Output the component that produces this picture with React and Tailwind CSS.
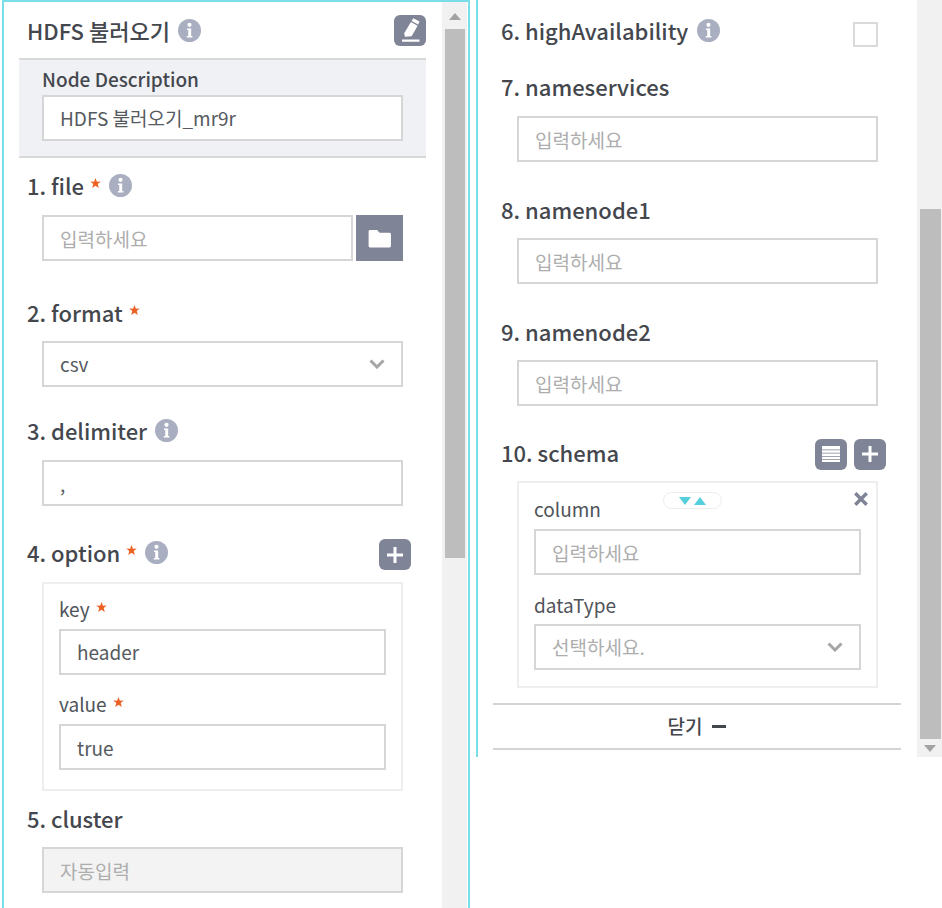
const inputBox = "block box-border h-[46px] w-full border-2 border-[#d6d6d6] px-[16px] text-[19px] text-[#555a60] outline-none placeholder:text-[#adadad]";

function InfoIcon({ className = "ml-[8px]" }) {
  return (
    <svg viewBox="0 0 22 22" className={`h-[23px] w-[23px] shrink-0 ${className}`}>
      <circle cx="11" cy="11" r="11" fill="#a9afc1" />
      <circle cx="11" cy="5.6" r="2" fill="#fff" />
      <path d="M8.6 9h4v7.2h1.2v1.6H8.4v-1.6h1.4v-5.6H8.6z" fill="#fff" />
    </svg>
  );
}

function IconButton({ children }) {
  return (
    <button className="flex h-[31px] w-[32px] items-center justify-center rounded-[6px] bg-[#7f8496]">
      {children}
    </button>
  );
}

function PlusIcon() {
  return (
    <svg viewBox="0 0 20 20" className="h-[20px] w-[20px]">
      <path d="M8.5 2h3v6.5H18v3h-6.500V18h-3v-6.500H2v-3h6.500z" fill="#fff" />
    </svg>
  );
}

function Chevron() {
  return (
    <svg viewBox="0 0 16 10" className="h-[10px] w-[16px]">
      <path d="M1.500 1.500L8 8l6.500-6.500" fill="none" stroke="#a6a6a6" strokeWidth="3" />
    </svg>
  );
}

function Star() {
  return (
    <svg viewBox="0 0 12 12" className="mb-[4px] ml-[6px] h-[11px] w-[11px] shrink-0">
      <path d="M6 0l1.500 4.100 4.300-.2-3.400 2.700 1.200 4.200L6 8.400l-3.600 2.400 1.200-4.200L.2 3.900l4.300.2z" fill="#ee5f22" />
    </svg>
  );
}

function Label({ children, className = "", size = "text-[22px]", lift = "pb-[3px]" }) {
  return (
    <div className={`flex h-[30px] items-center font-medium text-[#44474d] ${size} ${lift} ${className}`}>
      {children}
    </div>
  );
}

function SubLabel({ children, className = "" }) {
  return (
    <div className={`flex h-[24px] items-center pb-[1px] text-[19px] text-[#50545a] ${className}`}>
      {children}
    </div>
  );
}

function TextInput({ value, placeholder = "입력하세요", className = "", bg = "bg-white" }) {
  return <input readOnly value={value ?? ""} placeholder={placeholder} className={`${inputBox} ${bg} ${className}`} />;
}

function Select({ value, muted }) {
  return (
    <div className={`${inputBox} flex items-center justify-between bg-white ${muted ? "text-[#adadad]" : ""}`}>
      <span>{value}</span>
      <Chevron />
    </div>
  );
}

function Scrollbar({ thumbClass, topClass, bottom }) {
  return (
    <div className="flex w-[25px] shrink-0 flex-col bg-[#f1f1f1]">
      <div className={`flex items-center justify-center ${topClass}`}>
        {!bottom && (
          <svg viewBox="0 0 12 7" className="mt-[2px] h-[7px] w-[12px]">
            <path d="M6 0l6 7H0z" fill="#a3a3a3" />
          </svg>
        )}
      </div>
      <div className={`bg-[#bdbdbd] ${thumbClass}`} />
      {bottom && (
        <div className="flex flex-1 items-center justify-center">
          <svg viewBox="0 0 12 7" className="h-[7px] w-[12px]">
            <path d="M6 7l6-7H0z" fill="#a3a3a3" />
          </svg>
        </div>
      )}
    </div>
  );
}

function LeftPanel() {
  return (
    <div className="flex h-[908px] w-[468px] shrink-0 border-x-2 border-t-2 border-[#7adde7]">
      <div className="w-[438px] shrink-0">
        <div className="ml-[23px] mr-[16px] mt-[13px] flex h-[31px] items-center justify-between">
          <Label lift="">HDFS 불러오기 <InfoIcon /></Label>
          <IconButton>
            <svg viewBox="0 0 24 24" className="h-[27px] w-[27px]">
              <path d="M14.500 1l5.500 3-1.200 2.600-5.800-3.100z" fill="#fff" />
              <path d="M12.400 4.500l5.900 3.200L13 17l-6 .5-.6-3z" fill="#fff" />
              <path d="M4.500 20h15.500v2H4.500z" fill="#fff" />
            </svg>
          </IconButton>
        </div>

        <div className="ml-[15px] mr-[16px] mt-[12px] h-[100px] border-y-2 border-[#d8d8d8] bg-[#f0f1f5] px-[23px] pt-[5px]">
          <Label size="text-[19px]" lift="pb-[2px]">Node Description</Label>
          <TextInput value="HDFS 불러오기_mr9r" className="w-[361px] pb-[2px]" />
        </div>

        <div className="ml-[23px] mr-[39px]">
          <Label className="mt-[14px]">1. file <Star /> <InfoIcon /></Label>
          <div className="ml-[15px] mt-[13px] flex gap-[3px]">
            <TextInput className="flex-1" />
            <button className="flex h-[46px] w-[47px] shrink-0 items-center justify-center bg-[#7f8496]">
              <svg viewBox="0 0 24 20" className="h-[19px] w-[24px]">
                <path d="M1.500 1h7.500l2.500 3H22a1.500 1.500 0 0 1 1.500 1.500V18a1.500 1.500 0 0 1-1.500 1.500H1.500A1.500 1.500 0 0 1 0 18V2.500A1.500 1.500 0 0 1 1.500 1z" fill="#fff" />
              </svg>
            </button>
          </div>

          <Label className="mt-[38px]">2. format <Star /></Label>
          <div className="ml-[15px] mt-[12px]"><Select value="csv" /></div>

          <Label className="mt-[30px]">3. delimiter <InfoIcon /></Label>
          <div className="ml-[15px] mt-[13px]"><TextInput value="," /></div>

          <div className="relative mt-[33px]">
            <Label>4. option <Star /> <InfoIcon /></Label>
            <div className="absolute right-[-8px] top-0">
              <IconButton><PlusIcon /></IconButton>
            </div>
          </div>

          <div className="ml-[15px] mt-[13px] h-[209px] border-2 border-[#eeeeee] px-[15px] pt-[14px]">
            <SubLabel>key <Star /></SubLabel>
            <TextInput value="header" className="mt-[7px] pb-[2px]" />
            <SubLabel className="mt-[18px]">value <Star /></SubLabel>
            <TextInput value="true" className="mt-[7px]" />
          </div>

          <Label className="mt-[14px]">5. cluster</Label>
          <div className="ml-[15px] mt-[12px]">
            <TextInput placeholder="자동입력" bg="bg-[#f3f3f3]" />
          </div>
        </div>
      </div>
      <Scrollbar topClass="h-[27px]" thumbClass="ml-[3px] h-[529px] w-[20px]" />
    </div>
  );
}

function RightPanel() {
  return (
    <div className="ml-[6px] flex h-[757px] w-[466px] shrink-0 border-l-2 border-[#7adde7]">
      <div className="w-[439px] shrink-0">
        <div className="ml-[23px] mr-[39px]">
          <div className="mt-[17px] flex h-[30px] items-center justify-between">
            <Label>6. highAvailability <InfoIcon className="ml-[9px]" /></Label>
            <div className="mt-[5px] h-[25px] w-[25px] border-2 border-[#dadada]" />
          </div>

          <Label className="mt-[26px]">7. nameservices</Label>
          <div className="ml-[16px] mt-[13px]"><TextInput /></div>

          <Label className="mt-[34px]">8. namenode1</Label>
          <div className="ml-[16px] mt-[12px]"><TextInput /></div>

          <Label className="mt-[34px]">9. namenode2</Label>
          <div className="ml-[16px] mt-[12px]"><TextInput /></div>

          <div className="mt-[33px] flex h-[30px] items-center justify-between">
            <Label>10. schema</Label>
            <div className="mr-[-8px] flex gap-[7px]">
              <IconButton>
                <svg viewBox="0 0 18 16" className="h-[16px] w-[18px]">
                  <path d="M0 0h18v3.500H0zM0 4.300h18v2.400H0zM0 7.500h18v2.400H0zM0 10.700h18v2.400H0zM0 13.800h18V16H0z" fill="#fff" />
                </svg>
              </IconButton>
              <IconButton><PlusIcon /></IconButton>
            </div>
          </div>

          <div className="relative ml-[16px] mt-[12px] h-[207px] border-2 border-[#eeeeee] px-[15px] pt-[15px]">
            <div className="absolute left-[144px] top-[9px] flex h-[17px] w-[59px] items-center justify-center gap-[3px] rounded-full border border-[#ececec] bg-white">
              <svg viewBox="0 0 12 8" className="h-[8px] w-[12px]"><path d="M0 0h12L6 8z" fill="#56cfdc" /></svg>
              <svg viewBox="0 0 12 8" className="h-[8px] w-[12px]"><path d="M0 8h12L6 0z" fill="#56cfdc" /></svg>
            </div>
            <svg viewBox="0 0 14 14" className="absolute right-[7px] top-[8px] h-[16px] w-[16px]">
              <path d="M2 2l10 10M12 2L2 12" stroke="#7f8496" strokeWidth="3" />
            </svg>
            <SubLabel>column</SubLabel>
            <TextInput className="mt-[7px]" />
            <SubLabel className="mt-[19px]">dataType</SubLabel>
            <div className="mt-[6px]"><Select value="선택하세요." muted /></div>
          </div>
        </div>

        <div className="ml-[15px] mr-[16px] mt-[15px] flex h-[47px] items-center justify-center gap-[10px] border-y-2 border-[#d4d4d4] text-[19px] font-medium text-[#44474d]">
          닫기 <span className="h-[3px] w-[14px] bg-[#44474d]" />
        </div>
      </div>
      <Scrollbar bottom topClass="h-[209px]" thumbClass="ml-[3px] h-[530px] w-[21px]" />
    </div>
  );
}

export default function App() {
  return (
    <div className="flex h-[908px] w-[942px] overflow-hidden bg-white pl-[2px] font-['Noto_Sans_CJK_KR','Noto_Sans',sans-serif]">
      <LeftPanel />
      <RightPanel />
    </div>
  );
}
